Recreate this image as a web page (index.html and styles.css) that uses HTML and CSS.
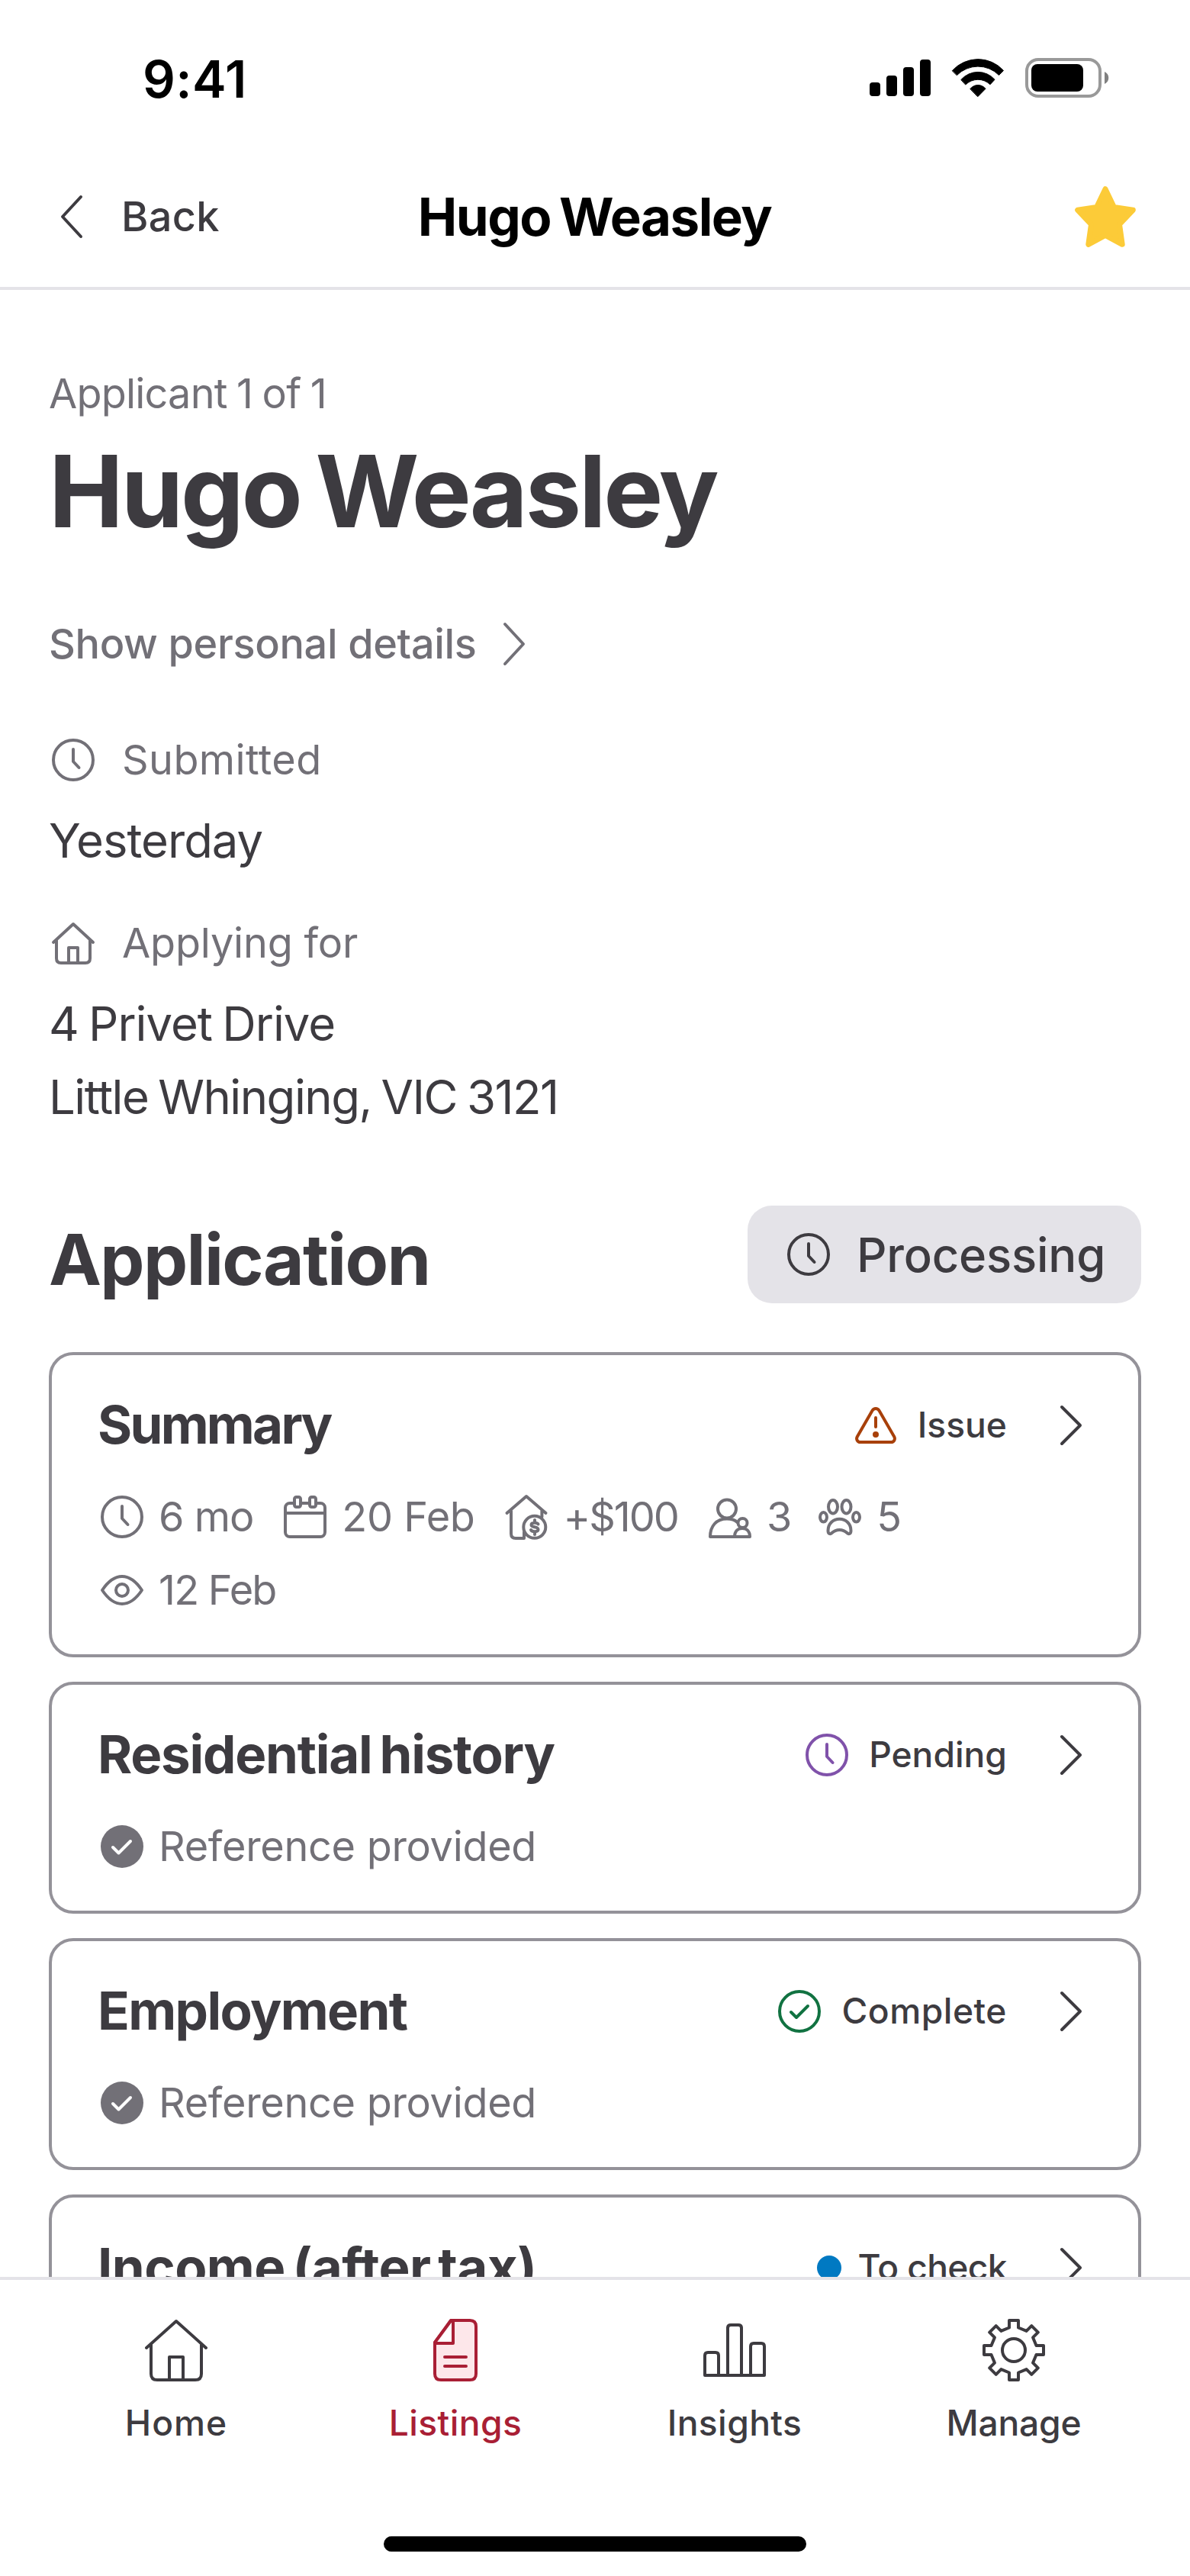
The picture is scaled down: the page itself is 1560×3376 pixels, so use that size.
FILE: index.html
```html
<!DOCTYPE html>
<html lang="en">
<head>
<meta charset="utf-8">
<title>Hugo Weasley</title>
<link rel="stylesheet" href="styles.css">
</head>
<body>
<svg class="sprite" aria-hidden="true">
  <symbol id="clock" viewBox="0 0 64 64"><circle cx="32" cy="32" r="26"/><path d="M32 18V34L39.5 42"/></symbol>
  <symbol id="chevron" viewBox="0 0 64 64"><path d="M20 8L44 32L20 56"/></symbol>
  <symbol id="check-ring" viewBox="0 0 64 64"><circle cx="32" cy="32" r="26"/><path d="M21 33L28 40L43 25"/></symbol>
  <symbol id="check-solid" viewBox="0 0 64 64"><circle cx="32" cy="32" r="28" fill="currentColor" stroke="none"/><path d="M20 33L27.5 40.500L43 25" stroke="#fff"/></symbol>
</svg>
<div class="screen">
  <div class="status-bar">
    <span class="time">9:41</span>
    <svg class="system" viewBox="1140 72 316 60">
      <rect x="1140" y="108" width="14" height="18" rx="4"/>
      <rect x="1162" y="99" width="14" height="27" rx="4"/>
      <rect x="1184" y="88" width="14" height="38" rx="4"/>
      <rect x="1206" y="78" width="14" height="48" rx="4"/>
      <path class="wifi" d="M1248.500 92.500A45 45 0 0 1 1315.500 92.500L1309.500 98.500A38.600 38.600 0 0 0 1254.500 98.500ZM1260 104.300A29.300 29.300 0 0 1 1304 104.300L1298 110.800A22.700 22.700 0 0 0 1266 110.800ZM1272 116.300A12.700 12.700 0 0 1 1292 116.300L1282 126.500Z"/>
      <rect class="shell" x="1346" y="78" width="96" height="48" rx="15"/>
      <rect x="1352" y="84" width="68" height="36" rx="8"/>
      <path class="nub" d="M1448 94C1455 97 1455 107 1448 110Z"/>
    </svg>
  </div>
  <header class="nav">
    <a class="back"><svg class="icon" viewBox="0 0 64 64"><path d="M42 6L18 32L42 58"/></svg><span>Back</span></a>
    <div class="nav-title">Hugo Weasley</div>
    <svg class="star" viewBox="0 0 80 80"><path d="M40 3.700L51.400 27.400L76.300 31.300L58.500 50L62.200 76.300L40 64.300L17.800 76.300L21.500 50L3.700 31.300L28.600 27.400Z"/></svg>
  </header>
  <main class="content">
    <p class="eyebrow">Applicant 1 of 1</p>
    <h1>Hugo Weasley</h1>
    <a class="details"><span>Show personal details</span><svg class="icon" viewBox="0 0 64 64"><path d="M20 6L44 32L20 58"/></svg></a>
    <div class="label first"><svg class="icon"><use href="#clock"/></svg><span>Submitted</span></div>
    <p class="value">Yesterday</p>
    <div class="label second"><svg class="icon" viewBox="0 0 64 64"><path d="M6 31L32 7L58 31M10 28V52Q10 58 16 58H48Q54 58 54 52V28M26 58V38H38V58"/></svg><span class="applying">Applying for</span></div>
    <p class="value">4 Privet Drive<br><span class="suburb">Little Whinging, VIC 3121</span></p>
    <div class="section">
      <h2>Application</h2>
      <div class="pill"><svg class="icon"><use href="#clock"/></svg><span>Processing</span></div>
    </div>
    <div class="cards">
      <section class="card">
        <div class="card-head">
          <h3 class="summary">Summary</h3>
          <svg class="icon issue" viewBox="0 0 64 64"><path d="M27.600 12.600A5 5 0 0 1 36.400 12.600L56.300 47A4.700 4.700 0 0 1 52.300 54H11.700A4.700 4.700 0 0 1 7.700 47ZM32 22V34"/><circle class="solid" cx="32" cy="44" r="4"/></svg>
          <span class="state">Issue</span>
          <svg class="icon go"><use href="#chevron"/></svg>
        </div>
        <div class="meta">
          <span class="fact"><svg class="icon"><use href="#clock"/></svg><span class="term">6 mo</span></span>
          <span class="fact"><svg class="icon" viewBox="0 0 64 64"><rect x="6" y="14" width="52" height="44" rx="6"/><path d="M6 27H58" /><rect class="ring" x="18" y="6" width="8" height="13" rx="2.500"/><rect class="ring" x="38" y="6" width="8" height="13" rx="2.500"/></svg><span class="date">20 Feb</span></span>
          <span class="fact"><svg class="icon" viewBox="0 0 64 64"><path d="M6.500 27L32 5L57.500 27M12 24V54Q12 60 18 60H29V52M52.400 24V32"/><circle cx="42.800" cy="45.300" r="14.500"/><path d="M47.500 41.500C46 39 38.500 39 38.500 42.500C38.500 46.500 47.500 44 47.500 48.500C47.500 52 39.500 52 38 49M43 36V39M43 52V55"/></svg><span class="rent">+$100</span></span>
          <span class="fact"><svg class="icon" viewBox="0 0 64 64"><ellipse cx="28" cy="21.500" rx="12" ry="12"/><path d="M6 58C6 44 14 34.500 28 34.500C33 34.500 38 35.500 41.500 39M6 58H58C58 51 54 47 48 47C42 47 38 51 38 58"/><circle cx="48.500" cy="40" r="6"/></svg><span class="count">3</span></span>
          <span class="fact"><svg class="icon" viewBox="0 0 64 64"><ellipse cx="23" cy="18.700" rx="6" ry="8.700"/><ellipse cx="40.500" cy="18.700" rx="6" ry="8.700"/><ellipse cx="10.500" cy="32.300" rx="4.500" ry="6.300"/><ellipse cx="53.500" cy="32.300" rx="4.500" ry="6.300"/><path d="M16.500 50C16.500 41 23 34.700 31.500 34.700C40 34.700 46.500 41 46.500 50C46.500 54.500 43.500 55 41.500 53C36 47.500 27 47.500 21.500 53C19.500 55 16.500 54.500 16.500 50Z"/></svg><span class="count">5</span></span>
          <span class="fact"><svg class="icon" viewBox="0 0 64 64"><path d="M6 32Q18 14 32 14Q46 14 58 32Q46 50 32 50Q18 50 6 32Z"/><circle cx="32" cy="32" r="8"/></svg><span class="viewed">12 Feb</span></span>
        </div>
      </section>
      <section class="card">
        <div class="card-head">
          <h3 class="history">Residential history</h3>
          <svg class="icon pending"><use href="#clock"/></svg>
          <span class="state">Pending</span>
          <svg class="icon go"><use href="#chevron"/></svg>
        </div>
        <div class="meta"><span class="fact"><svg class="icon"><use href="#check-solid"/></svg><span class="reference">Reference provided</span></span></div>
      </section>
      <section class="card">
        <div class="card-head">
          <h3>Employment</h3>
          <svg class="icon complete"><use href="#check-ring"/></svg>
          <span class="state wide">Complete</span>
          <svg class="icon go"><use href="#chevron"/></svg>
        </div>
        <div class="meta"><span class="fact"><svg class="icon"><use href="#check-solid"/></svg><span class="reference">Reference provided</span></span></div>
      </section>
      <section class="card">
        <div class="card-head">
          <h3 class="income">Income (after tax)</h3>
          <svg class="icon todo" viewBox="0 0 64 64"><circle class="solid" cx="32" cy="32" r="16"/></svg>
          <span class="state tight">To check</span>
          <svg class="icon go"><use href="#chevron"/></svg>
        </div>
      </section>
    </div>
  </main>
  <nav class="tabs">
    <div class="tab-row">
      <a class="tab"><svg viewBox="0 0 96 96"><path d="M9 45L48 10L87 45M15 41V79Q15 87 23 87H73Q81 87 81 79V41M39 87V57H57V87"/></svg><span class="home">Home</span></a>
      <a class="tab active"><svg viewBox="0 0 96 96"><path class="sheet" d="M42 9H67Q75 9 75 17V79Q75 87 67 87H29Q21 87 21 79V38Z"/><path class="fold" d="M42.500 9H45V39H21V38Z"/><path d="M34 57H62M34 69H62"/></svg><span>Listings</span></a>
      <a class="tab"><svg viewBox="0 0 96 96"><path d="M9 81V55Q9 51 13 51H23Q27 51 27 55V81M39 81V19Q39 15 43 15H53Q57 15 57 19V81M69 81V43Q69 39 73 39H83Q87 39 87 43V81M9 81H87"/></svg><span>Insights</span></a>
      <a class="tab"><svg viewBox="0 0 96 96"><path d="M42 18.500V9H54V18.500L64.600 22.900L71.300 16.200L79.800 24.700L73.100 31.400L77.500 42H87V54H77.500L73.100 64.600L79.800 71.300L71.300 79.800L64.600 73.100L54 77.500V87H42V77.500L31.400 73.100L24.700 79.800L16.200 71.300L22.900 64.600L18.500 54H9V42H18.500L22.900 31.400L16.200 24.700L24.700 16.200L31.400 22.900Z"/><circle cx="48" cy="48" r="15"/></svg><span class="manage">Manage</span></a>
    </div>
    <div class="home-indicator"></div>
  </nav>
</div>
</body>
</html>
```
FILE: styles.css
```css
* { box-sizing: border-box; }

body {
  margin: 0;
  background: #fff;
  color: #3d3b40;
  font-family: Inter, "Liberation Sans", sans-serif;
}

h1, h2, h3, p { margin: 0; }

.sprite { display: none; }

.screen {
  display: flex;
  flex-direction: column;
  width: 1560px;
  height: 3376px;
  overflow: hidden;
}

svg {
  display: block;
  flex: none;
  fill: none;
  stroke: currentColor;
  stroke-width: 4;
  stroke-linecap: round;
  stroke-linejoin: round;
}

.icon { width: 64px; height: 64px; }
.solid { fill: currentColor; stroke: none; }
.ring { fill: #fff; }

/* Status bar */
.status-bar {
  display: flex;
  flex: none;
  justify-content: space-between;
  height: 192px;
  padding: 72px 104px 0 187px;
  color: #000;
}

.time {
  font-size: 67px;
  font-weight: 600;
  line-height: 63px;
  letter-spacing: .4px;
}

.system {
  width: 316px;
  height: 60px;
  fill: #000;
  stroke: none;
}

.wifi { stroke: #000; stroke-width: 1; }
.shell { fill: none; stroke: #999; stroke-width: 4; }
.nub { fill: #808080; }

/* Navigation header */
.nav {
  display: grid;
  flex: none;
  grid-template-columns: 1fr auto 1fr;
  align-items: center;
  height: 188px;
  padding: 0 71px 0 64px;
  border-bottom: 4px solid #e4e3e8;
}

.back {
  display: flex;
  align-items: center;
  gap: 31px;
  font-size: 54px;
  font-weight: 500;
  line-height: 64px;
  letter-spacing: .3px;
}

.nav-title {
  padding-left: 6px;
  color: #000;
  font-size: 69px;
  font-weight: 700;
  line-height: 80px;
  letter-spacing: -1.5px;
  word-spacing: -4px;
}

.star {
  justify-self: end;
  width: 80px;
  height: 80px;
  fill: #fccb38;
  stroke: #fccb38;
  stroke-width: 7;
}

/* Applicant details */
.content {
  flex: 1;
  min-height: 0;
  overflow: hidden;
  padding: 96px 64px 0;
}

.eyebrow {
  color: #727077;
  font-size: 54px;
  line-height: 80px;
  letter-spacing: -.8px;
  word-spacing: -2px;
}

h1 {
  margin-top: 8px;
  font-size: 131px;
  font-weight: 700;
  line-height: 160px;
  letter-spacing: -3.2px;
  word-spacing: -8px;
}

.details {
  display: flex;
  align-items: center;
  gap: 18px;
  margin-top: 80px;
  color: #727077;
  font-size: 54px;
  font-weight: 500;
  line-height: 80px;
  letter-spacing: -.35px;
}

.label {
  display: flex;
  align-items: center;
  gap: 32px;
  color: #727077;
  font-size: 54px;
  line-height: 80px;
  letter-spacing: .4px;
}

.first { margin-top: 72px; }
.second { margin-top: 46px; }
.applying { letter-spacing: -.2px; }

.value {
  margin-top: 18px;
  font-size: 61.6px;
  line-height: 96px;
  letter-spacing: -1px;
  word-spacing: -3px;
}

.suburb { letter-spacing: -1.5px; }

.section {
  display: flex;
  justify-content: space-between;
  align-items: flex-start;
  margin: 94px 0 64px;
}

h2 {
  margin-top: 12px;
  font-size: 92.5px;
  font-weight: 700;
  line-height: 116px;
  letter-spacing: -1.7px;
}

.pill {
  display: flex;
  align-items: center;
  gap: 31px;
  width: 516px;
  height: 128px;
  padding-left: 48px;
  border-radius: 32px;
  background: #e4e3e8;
  font-size: 61.6px;
  font-weight: 500;
  letter-spacing: -.2px;
}

/* Cards */
.cards {
  display: flex;
  flex-direction: column;
  gap: 32px;
}

.card {
  padding: 56px 56px 52px 60px;
  border: 4px solid #949299;
  border-radius: 32px;
}

.card-head {
  display: flex;
  align-items: center;
  height: 72px;
}

h3 {
  flex: 1;
  padding-bottom: 2px;
  font-size: 69px;
  font-weight: 700;
  line-height: 70px;
  letter-spacing: -1.65px;
}

.summary { letter-spacing: -2.75px; }
.history { letter-spacing: -1.25px; word-spacing: -5px; }
.income { letter-spacing: -.6px; word-spacing: -6px; }

.state {
  margin: 0 52px 0 23px;
  padding-bottom: 2px;
  font-size: 46.2px;
  font-weight: 500;
  line-height: 70px;
}

.wide { letter-spacing: .5px; }
.tight { margin-left: 5px; letter-spacing: -.65px; }

.issue { color: #a8400a; }
.pending { color: #8052aa; }
.complete { color: #117241; }
.todo { color: #0079c2; }

.meta {
  display: flex;
  flex-wrap: wrap;
  gap: 32px 36px;
  margin-top: 52px;
  color: #727077;
  font-size: 54px;
  line-height: 64px;
}

.fact {
  display: flex;
  gap: 16px;
}

.term { letter-spacing: -1px; }
.date { letter-spacing: -.4px; }
.rent { letter-spacing: -2px; }
.count { letter-spacing: -5px; }
.viewed { letter-spacing: -1.8px; }
.reference { letter-spacing: -.3px; }

/* Tab bar */
.tabs {
  flex: none;
  height: 392px;
  padding: 44px 48px 0;
  border-top: 4px solid #e4e3e8;
  background: #fff;
}

.tab-row {
  display: grid;
  grid-template-columns: repeat(4, 1fr);
}

.tab {
  display: flex;
  flex-direction: column;
  align-items: center;
  gap: 15px;
  font-size: 46.2px;
  font-weight: 500;
  line-height: 64px;
  letter-spacing: .4px;
}

.tab svg { width: 96px; height: 96px; }
.home { letter-spacing: 1px; }
.manage { letter-spacing: -.2px; }
.active { color: #a91f35; }
.sheet { fill: #fde7ea; }
.fold { fill: #fff; }

.home-indicator {
  width: 554px;
  height: 20px;
  margin: 117px auto 0;
  border-radius: 10px;
  background: #000;
}
```
